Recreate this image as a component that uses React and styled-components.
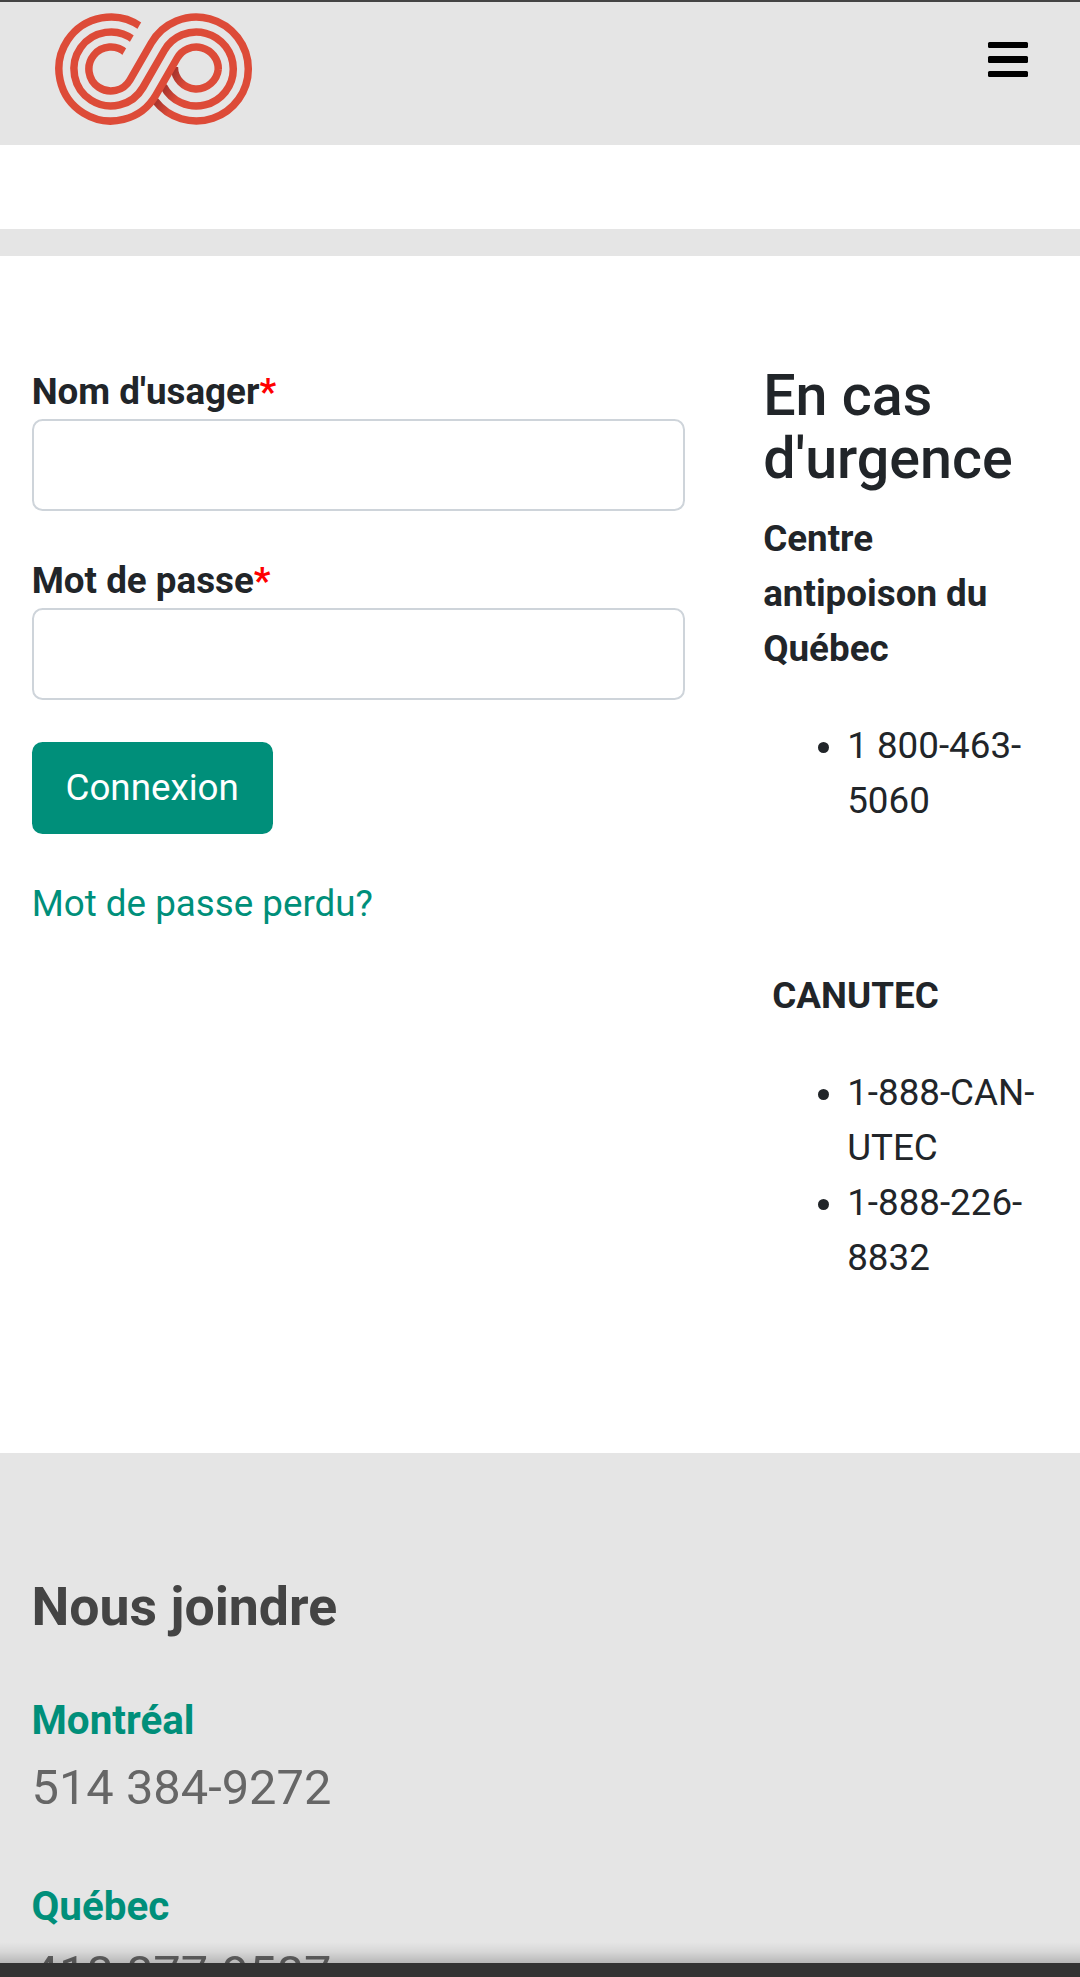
import React from 'react'
import styled, { createGlobalStyle } from 'styled-components'

const GlobalStyle = createGlobalStyle`
    * {
        box-sizing: border-box;
    }

    body {
        margin: 0;
        height: 1977px;
        overflow: hidden;
        background: #fff;
        color: #212529;
        font-family: Roboto, "Liberation Sans", sans-serif;
        font-size: 36.75px;
        line-height: 55.125px;
    }
`

const Page = styled.div`
    position: relative;
    display: flex;
    flex-direction: column;
    height: 1977px;
    overflow: hidden;
`

const Header = styled.header`
    flex: none;
    display: flex;
    align-items: flex-start;
    justify-content: space-between;
    height: 145px;
    padding: 10px 52px 0 54px;
    border-top: 2px solid #444;
    background: #e5e5e5;
`

const MenuButton = styled.button`
    display: flex;
    flex-direction: column;
    gap: 8px;
    width: 40px;
    margin-top: 30px;
    padding: 0;
    border: 0;
    background: none;
`

const MenuBar = styled.span`
    height: 6.4px;
    border-radius: 1.5px;
    background: #000;
`

const Banner = styled.div`
    flex: none;
    height: 111px;
    border-bottom: 27px solid #e5e5e5;
`

const Main = styled.main`
    flex: none;
    display: grid;
    grid-template-columns: 653px 1fr;
    column-gap: 78.5px;
    height: 1197px;
    padding: 108px 31.5px 0 31.7px;
`

const Form = styled.form`
    display: flex;
    flex-direction: column;
    align-items: flex-start;
`

const Label = styled.label`
    height: 55px;
    font-weight: 700;
`

const Required = styled.span`
    color: #f00;
`

const Input = styled.input`
    width: 100%;
    height: 92px;
    margin-bottom: 42px;
    padding: 16px 31px;
    border: 2px solid #ced4da;
    border-radius: 10.5px;
    background: #fff;
    font: inherit;
`

const SubmitButton = styled.button`
    height: 92px;
    width: 241px;
    margin-bottom: 42px;
    padding: 0;
    border: 0;
    border-radius: 10.5px;
    background: #008f7a;
    color: #fff;
    font: inherit;
`

const Lost = styled.a`
    color: #008f7a;
    text-decoration: none;
`

const Title = styled.h2`
    margin: 0 0 20.8px;
    font-size: 57.4px;
    font-weight: 500;
    line-height: 63px;
`

const Paragraph = styled.p`
    margin: 0 0 42px;
`

const List = styled.ul`
    margin: 0 0 42px;
    padding-left: 84px;
`

const Footer = styled.footer`
    flex: 1;
    min-height: 0;
    padding: 118px 31.5px 0;
    background: #e5e5e5;
    overflow: hidden;
`

const FooterTitle = styled.h3`
    margin: 0 0 48.3px;
    color: #444;
    font-size: 53.6px;
    font-weight: 700;
    line-height: 72px;
`

const City = styled.div`
    color: #008f7a;
    font-size: 40.4px;
    font-weight: 700;
    line-height: 59px;
`

const Phone = styled.div`
    margin-bottom: 52px;
    color: #666;
    font-size: 48.8px;
    line-height: 75px;
`

// fixed bar that lies over the end of the page
const BottomBar = styled.div`
    position: absolute;
    right: 0;
    bottom: 0;
    left: 0;
    height: 14px;
    background: #333;

    &::before {
        content: "";
        position: absolute;
        right: 0;
        bottom: 100%;
        left: 0;
        height: 21px;
        background: linear-gradient(rgba(0, 0, 0, 0), rgba(0, 0, 0, 0.06) 45%, rgba(0, 0, 0, 0.2));
    }
`

const LEFT = [56.9, 57]
const RIGHT = [142.3, 57]

// n goes across the diagonal bands, d goes up along them
const point = (center, n, d) => {
    const x = center[0] + n * 0.866 + d * 0.5
    const y = center[1] + n * 0.5 - d * 0.866
    return `${x.toFixed(2)} ${y.toFixed(2)}`
}

const along = (r, n) => Math.sqrt(Math.max(r * r - n * n, 0))

function Logo() {
    const rings = [22, 37, 52]

    return (
        <svg width="200" height="116" viewBox="0 0 200 116" fill="none" strokeWidth="7.5">
            <defs>
                <linearGradient
                    id="shade"
                    gradientUnits="userSpaceOnUse"
                    x1={RIGHT[0] - 16}
                    y1={RIGHT[1] - 9}
                    x2={RIGHT[0] - 1}
                    y2={RIGHT[1]}
                >
                    <stop offset="0" stopColor="#a5332d" />
                    <stop offset="1" stopColor="#dd4b38" />
                </linearGradient>
            </defs>
            {rings.map((r) => (
                <path
                    key={r}
                    stroke="url(#shade)"
                    d={`M${RIGHT[0] + r} ${RIGHT[1]} A${r} ${r} 0 0 1 ${point(RIGHT, -20, -along(r, 20))}`}
                />
            ))}
            {rings.map((r) => {
                const s = 74 - r
                return (
                    <path
                        key={r}
                        stroke="#dd4b38"
                        d={`M${point(LEFT, 5, along(r, 5))}
                            A${r} ${r} 0 1 0 ${point(LEFT, r, 0)}
                            L${point(RIGHT, -s, 0)}
                            A${s} ${s} 0 0 1 ${RIGHT[0] + s} ${RIGHT[1]}`}
                    />
                )
            })}
            <path
                fill="#e5e5e5"
                d={`M${point(LEFT, 2.9, 12)} L${point(LEFT, 2.9, 60)} L${point(LEFT, 12, 60)} L${point(LEFT, 12, 12)} Z`}
            />
        </svg>
    )
}

function App() {
    return (
        <Page>
            <GlobalStyle />
            <Header>
                <Logo />
                <MenuButton type="button" aria-label="Menu">
                    <MenuBar />
                    <MenuBar />
                    <MenuBar />
                </MenuButton>
            </Header>
            <Banner />
            <Main>
                <Form>
                    <Label htmlFor="username">Nom d'usager<Required>*</Required></Label>
                    <Input id="username" type="text" />
                    <Label htmlFor="password">Mot de passe<Required>*</Required></Label>
                    <Input id="password" type="password" />
                    <SubmitButton type="button">Connexion</SubmitButton>
                    <Lost href="#">Mot de passe perdu?</Lost>
                </Form>
                <div>
                    <Title>En cas d'urgence</Title>
                    <Paragraph><strong>Centre antipoison du Québec</strong></Paragraph>
                    <List>
                        <li>1 800-463-5060</li>
                    </List>
                    <Paragraph>&nbsp;</Paragraph>
                    <Paragraph>&nbsp;<strong>CANUTEC</strong></Paragraph>
                    <List>
                        <li>1-888-CAN-UTEC</li>
                        <li>1-888-226-8832</li>
                    </List>
                </div>
            </Main>
            <Footer>
                <FooterTitle>Nous joindre</FooterTitle>
                <City>Montréal</City>
                <Phone>514 384-9272</Phone>
                <City>Québec</City>
                <Phone>418 877-9587</Phone>
            </Footer>
            <BottomBar />
        </Page>
    )
}

export default App
